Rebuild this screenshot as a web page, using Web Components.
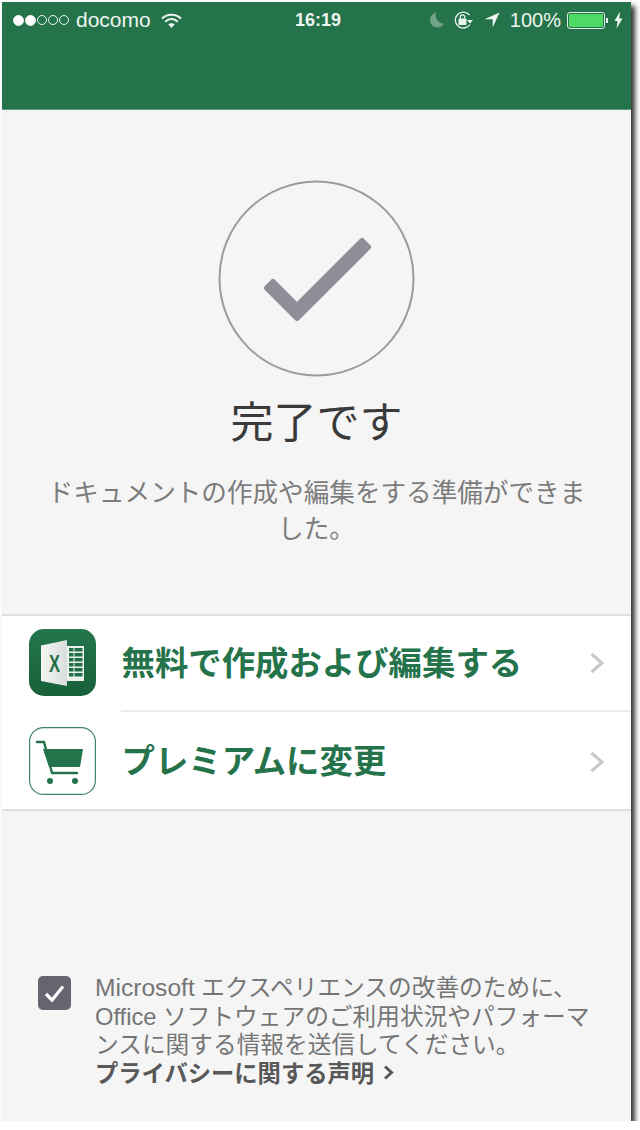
<!DOCTYPE html>
<html>
  <head>
    <meta charset="utf-8">
    <style>
      html, body { margin: 0; padding: 0; background: #fff; }
      body { font-family: "Liberation Sans", "Noto Sans CJK JP", sans-serif; }
    </style>
  </head>

  <body>
    <app-screen>
      <status-bar></status-bar>
      <done-hero title-text="完了です">ドキュメントの作成や編集をする準備ができま<br>した。</done-hero>
      <action-list>
        <action-row label="無料で作成および編集する">
          <svg slot="icon" width="67" height="67" viewBox="0 0 67 67">
            <defs>
              <linearGradient id="xl" x1="0" y1="0" x2="0" y2="1">
                <stop offset="0" stop-color="#24764c"/>
                <stop offset="1" stop-color="#18603a"/>
              </linearGradient>
              <linearGradient id="pg" x1="0" y1="0" x2="1" y2="0">
                <stop offset="0" stop-color="#f4f6f4"/>
                <stop offset="1" stop-color="#d8dedb"/>
              </linearGradient>
            </defs>
            <rect width="67" height="67" rx="15" fill="url(#xl)"/>
            <rect x="37" y="17" width="18" height="35" fill="#eef2ef"/>
            <path d="M40 19h4.500v3.500h-4.500zM45.500 19h8v3.500h-8zM40 24h4.500v3.500h-4.500zM45.500 24h8v3.500h-8zM40 29h4.500v3.500h-4.500zM45.500 29h8v3.500h-8zM40 34h4.500v3.500h-4.500zM45.500 34h8v3.500h-8zM40 39h4.500v3.500h-4.500zM45.500 39h8v3.500h-8zM40 44h4.500v3.500h-4.500zM45.500 44h8v3.500h-8z" fill="#1f6e45"/>
            <path d="M12 16.500L38 11V57L12 52z" fill="url(#pg)"/>
            <text x="25.500" y="42.700" text-anchor="middle" font-family="'Liberation Sans'" font-weight="700" font-size="23" textLength="11" lengthAdjust="spacingAndGlyphs" fill="#1f6e45">X</text>
          </svg>
        </action-row>
        <action-row label="プレミアムに変更" indent>
          <svg slot="icon" width="67" height="68" viewBox="0 0 67 68">
            <rect x=".6" y=".6" width="65.800" height="66.800" rx="14" fill="#fff" stroke="#3f8562" stroke-width="1.200"/>
            <path d="M8 15h7l8 31h25" fill="none" stroke="#24734a" stroke-width="2.400" stroke-linecap="round" stroke-linejoin="round"/>
            <path d="M14 22h40l-3 18h-31z" fill="#24734a"/>
            <circle cx="21" cy="54" r="3" fill="#24734a"/>
            <circle cx="46" cy="54" r="3" fill="#24734a"/>
          </svg>
        </action-row>
      </action-list>
      <consent-note link="プライバシーに関する声明"><span style="font-size:24.600px">Microsoft</span> エクスペリエンスの改善のために、<br>Office ソフトウェアのご利用状況やパフォーマ<br>ンスに関する情報を送信してください。</consent-note>
    </app-screen>

    <template id="app-screen-template">
      <style>
        :host {
          display: flex;
          flex-direction: column;
          width: 629px;
          height: 1119px;
          margin: 2px 0 0 2px;
          background: #f5f5f5;
          box-shadow: 4px 4px 5px #333;
        }
      </style>
      <slot></slot>
    </template>

    <template id="status-bar-template">
      <style>
        :host {
          display: block;
          height: 108px;
          box-sizing: border-box;
          background: #24734a;
          border-bottom: 1px solid #5f9a7c;
          color: #eef5f0;
          font-family: "Liberation Sans", sans-serif;
          font-size: 20px;
        }
        .bar {
          display: flex;
          align-items: center;
          height: 36px;
          padding: 0 8px 0 11px;
        }
        .left, .right { flex: 1; display: flex; align-items: center; }
        .right { justify-content: flex-end; }
        .dots { display: flex; gap: 1px; margin-right: 7px; }
        .dot { width: 10px; height: 10px; border: 1px solid #eef5f0; border-radius: 50%; box-sizing: border-box; }
        .dot.on { background: #fff; width: 11px; height: 11px; }
        .carrier { margin-right: 10px; font-size: 21px; }
        .time { font-weight: 700; font-size: 18px; }
        svg { display: block; }
      </style>
      <div class="bar">
        <div class="left">
          <span class="dots">
            <span class="dot on"></span><span class="dot on"></span><span class="dot"></span><span class="dot"></span><span class="dot"></span>
          </span>
          <span class="carrier">docomo</span>
          <svg width="21" height="17" viewBox="0 0 21 17">
            <path d="M1 6.500C6.500 1.500 14.500 1.500 20 6.500" fill="none" stroke="#eef5f0" stroke-width="2.200"/>
            <path d="M4.200 9.700C8 6.300 13 6.300 16.800 9.700" fill="none" stroke="#eef5f0" stroke-width="2.200"/>
            <path d="M7.200 12.300C9.200 10.800 11.800 10.800 13.800 12.300L10.500 16z" fill="#eef5f0"/>
          </svg>
        </div>
        <div class="time">16:19</div>
        <div class="right">
          <svg width="16" height="18" viewBox="0 0 16 18" style="margin-right:8px">
            <path d="M7 1.500C3.500 2.500 1 5.500 1 9c0 4.200 3.400 7.500 7.500 7.500 3 0 5.500-1.700 6.700-4.200C10.500 13.500 5.500 8 7 1.500z" fill="#6fa287"/>
          </svg>
          <svg width="22" height="20" viewBox="0 0 22 20" style="margin-right:9px">
            <path d="M16.500 5A8 8 0 1 0 17 14.500" fill="none" stroke="#eef5f0" stroke-width="1.300"/>
            <path d="M14 10h6l-3 3.500z" fill="#eef5f0"/>
            <rect x="5.500" y="8.500" width="8" height="6.500" rx="1" fill="#eef5f0"/>
            <path d="M7.300 8.500V7a2.200 2.200 0 0 1 4.400 0v1.500" fill="none" stroke="#eef5f0" stroke-width="1.200"/>
          </svg>
          <svg width="16" height="16" viewBox="0 0 16 16" style="margin-right:10px">
            <path d="M15.500.5L8.700 15.500V7.300H.5z" fill="#eef5f0"/>
          </svg>
          <span style="margin-right:6px">100%</span>
          <svg width="41" height="17" viewBox="0 0 41 17" style="margin-right:6px">
            <rect x=".5" y=".5" width="37" height="16" rx="2.500" fill="none" stroke="#dfeee5"/>
            <rect x="2" y="2" width="34" height="13" rx="1.200" fill="#4cd964"/>
            <path d="M39 6h1.500a.5.500 0 0 1 .5.500v4a.5.500 0 0 1-.5.500H39z" fill="#eef5f0"/>
          </svg>
          <svg width="9" height="18" viewBox="0 0 9 18">
            <path d="M6 .5L.5 10h3L2.500 17.500 8.500 7.500h-3.200z" fill="#eef5f0"/>
          </svg>
        </div>
      </div>
    </template>

    <template id="done-hero-template">
      <style>
        :host {
          display: flex;
          flex-direction: column;
          align-items: center;
          padding-top: 70px;
          font-family: "Noto Sans CJK JP", sans-serif;
        }
        svg { display: block; }
        h1 {
          margin: 12px 0 0;
          font-size: 43px;
          line-height: 60px;
          font-weight: 400;
          color: #3a3a3a;
        }
        p {
          margin: 24px 0 0;
          width: 100%;
          text-align: center;
          font-size: 25.600px;
          line-height: 36px;
          font-weight: 400;
          color: #7c7c7c;
        }
      </style>
      <svg width="197" height="197" viewBox="0 0 197 197">
        <circle cx="98.500" cy="98.500" r="97" fill="none" stroke="#9a9aa2" stroke-width="2"/>
        <path d="M49 108L55 102 79 126 144 61 150 67 79 138z" fill="#8e8e98" stroke="#8e8e98" stroke-width="6" stroke-linejoin="round"/>
      </svg>
      <h1 id="title"></h1>
      <p><slot></slot></p>
    </template>

    <template id="action-list-template">
      <style>
        :host {
          display: block;
          margin-top: 69px;
          background: #fff;
          border-top: 2px solid #dfdfdf;
          border-bottom: 2px solid #dfdfdf;
        }
      </style>
      <slot></slot>
    </template>

    <template id="action-row-template">
      <style>
        :host {
          display: block;
          font-family: "Noto Sans CJK JP", sans-serif;
        }
        .row {
          display: flex;
          align-items: center;
          height: 94px;
          padding: 0 26px 0 27px;
          box-sizing: border-box;
        }
        :host([indent]) .row { height: 97px; }
        :host([indent]) .line { display: block; }
        :host([indent]) ::slotted(svg) { margin-bottom: -1px; }
        :host([indent]) .chev { margin-top: 3px; }
        .line { display: none; height: 2px; margin-left: 119px; background: #ececec; }
        ::slotted(svg) { display: block; flex: none; margin-bottom: 1px; }
        .label {
          flex: 1;
          margin: 0 0 5px 25.500px;
          font-size: 33.400px;
          font-weight: 700;
          color: #24734a;
          white-space: nowrap;
        }
        .chev { display: block; }
      </style>
      <div class="line"></div>
      <div class="row">
        <slot name="icon"></slot>
        <span class="label" id="label"></span>
        <svg class="chev" width="16" height="22" viewBox="0 0 16 22">
          <path d="M2.500 2L13 11 2.500 20" fill="none" stroke="#c7c7cc" stroke-width="3"/>
        </svg>
      </div>
    </template>

    <template id="consent-note-template">
      <style>
        :host {
          display: flex;
          align-items: flex-start;
          margin-top: auto;
          padding: 0 0 33px 36px;
          font-family: "Liberation Sans", "Noto Sans CJK JP", sans-serif;
          font-size: 23.700px;
          line-height: 28.500px;
          color: #757575;
          font-weight: 400;
        }
        svg { display: block; flex: none; margin: 2px 24px 0 0; }
        .link {
          display: flex;
          align-items: center;
          gap: 9px;
          font-weight: 700;
          color: #585858;
          font-size: 23.300px;
        }
        .link svg { margin: 0 0 2px; }
        .text { white-space: nowrap; }
      </style>
      <svg width="33" height="34" viewBox="0 0 33 34">
        <rect width="33" height="34" rx="5" fill="#65656f"/>
        <path d="M8 18l6 6L25 10.500" fill="none" stroke="#fff" stroke-width="3.200"/>
      </svg>
      <div class="text">
        <slot></slot>
        <span class="link"><span id="link"></span>
          <svg width="11" height="15" viewBox="0 0 11 15"><path d="M2 1.500L8.500 7.500 2 13.500" fill="none" stroke="#585858" stroke-width="3"/></svg>
        </span>
      </div>
    </template>

    <script>
      // Plain elements: template goes straight into the shadow root
      function defineSimple(name) {
        customElements.define(name, class extends HTMLElement {
          constructor() {
            super();
            this.attachShadow({ mode: "open" });
            const template = document.querySelector(`#${name}-template`);
            this.shadowRoot.appendChild(template.content.cloneNode(true));
          }
        });
      }

      ["app-screen", "status-bar", "action-list"].forEach(defineSimple);

      // Elements with an attribute that fills a text node in the template
      function defineLabelled(name, attr, targetId) {
        customElements.define(name, class extends HTMLElement {
          constructor() {
            super();
            this.attachShadow({ mode: "open" });
            const template = document.querySelector(`#${name}-template`);
            this.shadowRoot.appendChild(template.content.cloneNode(true));
          }

          connectedCallback() {
            this.shadowRoot.querySelector(`#${targetId}`).textContent = this.getAttribute(attr);
          }
        });
      }

      defineLabelled("done-hero", "title-text", "title");
      defineLabelled("action-row", "label", "label");
      defineLabelled("consent-note", "link", "link");
    </script>
  </body>
</html>
